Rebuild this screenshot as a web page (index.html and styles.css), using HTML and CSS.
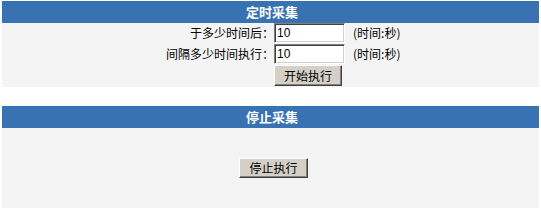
FILE: index.html
```html
<!DOCTYPE html>
<html lang="zh-CN">
<head>
<meta charset="utf-8">
<title>采集</title>
<link rel="stylesheet" href="styles.css">
</head>
<body>
<section class="panel">
  <div class="panel-head">定时采集</div>
  <div class="panel-body form">
    <label class="label" for="after">于多少时间后：</label>
    <input class="field" id="after" type="text" value="10">
    <span class="unit">(时间:秒)</span>
    <label class="label" for="every">间隔多少时间执行：</label>
    <input class="field" id="every" type="text" value="10">
    <span class="unit">(时间:秒)</span>
    <button class="btn btn-start" type="button">开始执行</button>
  </div>
</section>
<section class="panel panel-stop">
  <div class="panel-head">停止采集</div>
  <div class="panel-body stop">
    <button class="btn btn-stop" type="button">停止执行</button>
  </div>
</section>
</body>
</html>
```
FILE: styles.css
```css
html, body {
  background: #ffffff;
}
body {
  margin: 1px 2px 0 2px;
  font-family: "Noto Sans CJK SC", "Liberation Sans", sans-serif;
  font-size: 12px;
  color: #000000;
}
.panel {
  background: #f4f4f4;
}
.panel-stop {
  margin-top: 19px;
}
.panel-head {
  height: 22px;
  line-height: 22px;
  background: #3872b3;
  color: #ffffff;
  font-weight: bold;
  font-size: 13px;
  text-align: center;
  padding-left: 3px;
}
.form {
  display: grid;
  grid-template-columns: 272px 71px 1fr;
  row-gap: 1px;
  align-items: center;
  padding-bottom: 1px;
}
.label {
  text-align: right;
  font-size: 12px;
  line-height: 14px;
}
.field {
  box-sizing: border-box;
  width: 71px;
  height: 20px;
  margin: 0;
  padding: 0 2px;
  background: #ffffff;
  border: 1px solid;
  border-color: #808080 #ffffff #ffffff #808080;
  box-shadow: inset 1px 1px 0 #404040, inset -1px -1px 0 #d4d0c8;
  font-family: "Liberation Sans", sans-serif;
  font-size: 12px;
  color: #000000;
  outline: none;
}
.unit {
  padding-left: 8px;
  font-size: 12px;
  line-height: 14px;
}
.btn {
  box-sizing: border-box;
  margin: 0;
  padding: 0;
  background: #d4d0c8;
  border: 1px solid;
  border-color: #ffffff #404040 #404040 #ffffff;
  box-shadow: inset -1px -1px 0 #808080;
  font-family: "Noto Sans CJK SC", sans-serif;
  font-size: 12px;
  line-height: 14px;
  color: #000000;
}
.btn-start {
  grid-column: 2;
  justify-self: start;
  width: 68px;
  height: 21px;
}
.stop {
  height: 80px;
  display: flex;
  align-items: center;
  justify-content: center;
  padding-left: 6px;
}
.btn-stop {
  width: 69px;
  height: 20px;
}
```
